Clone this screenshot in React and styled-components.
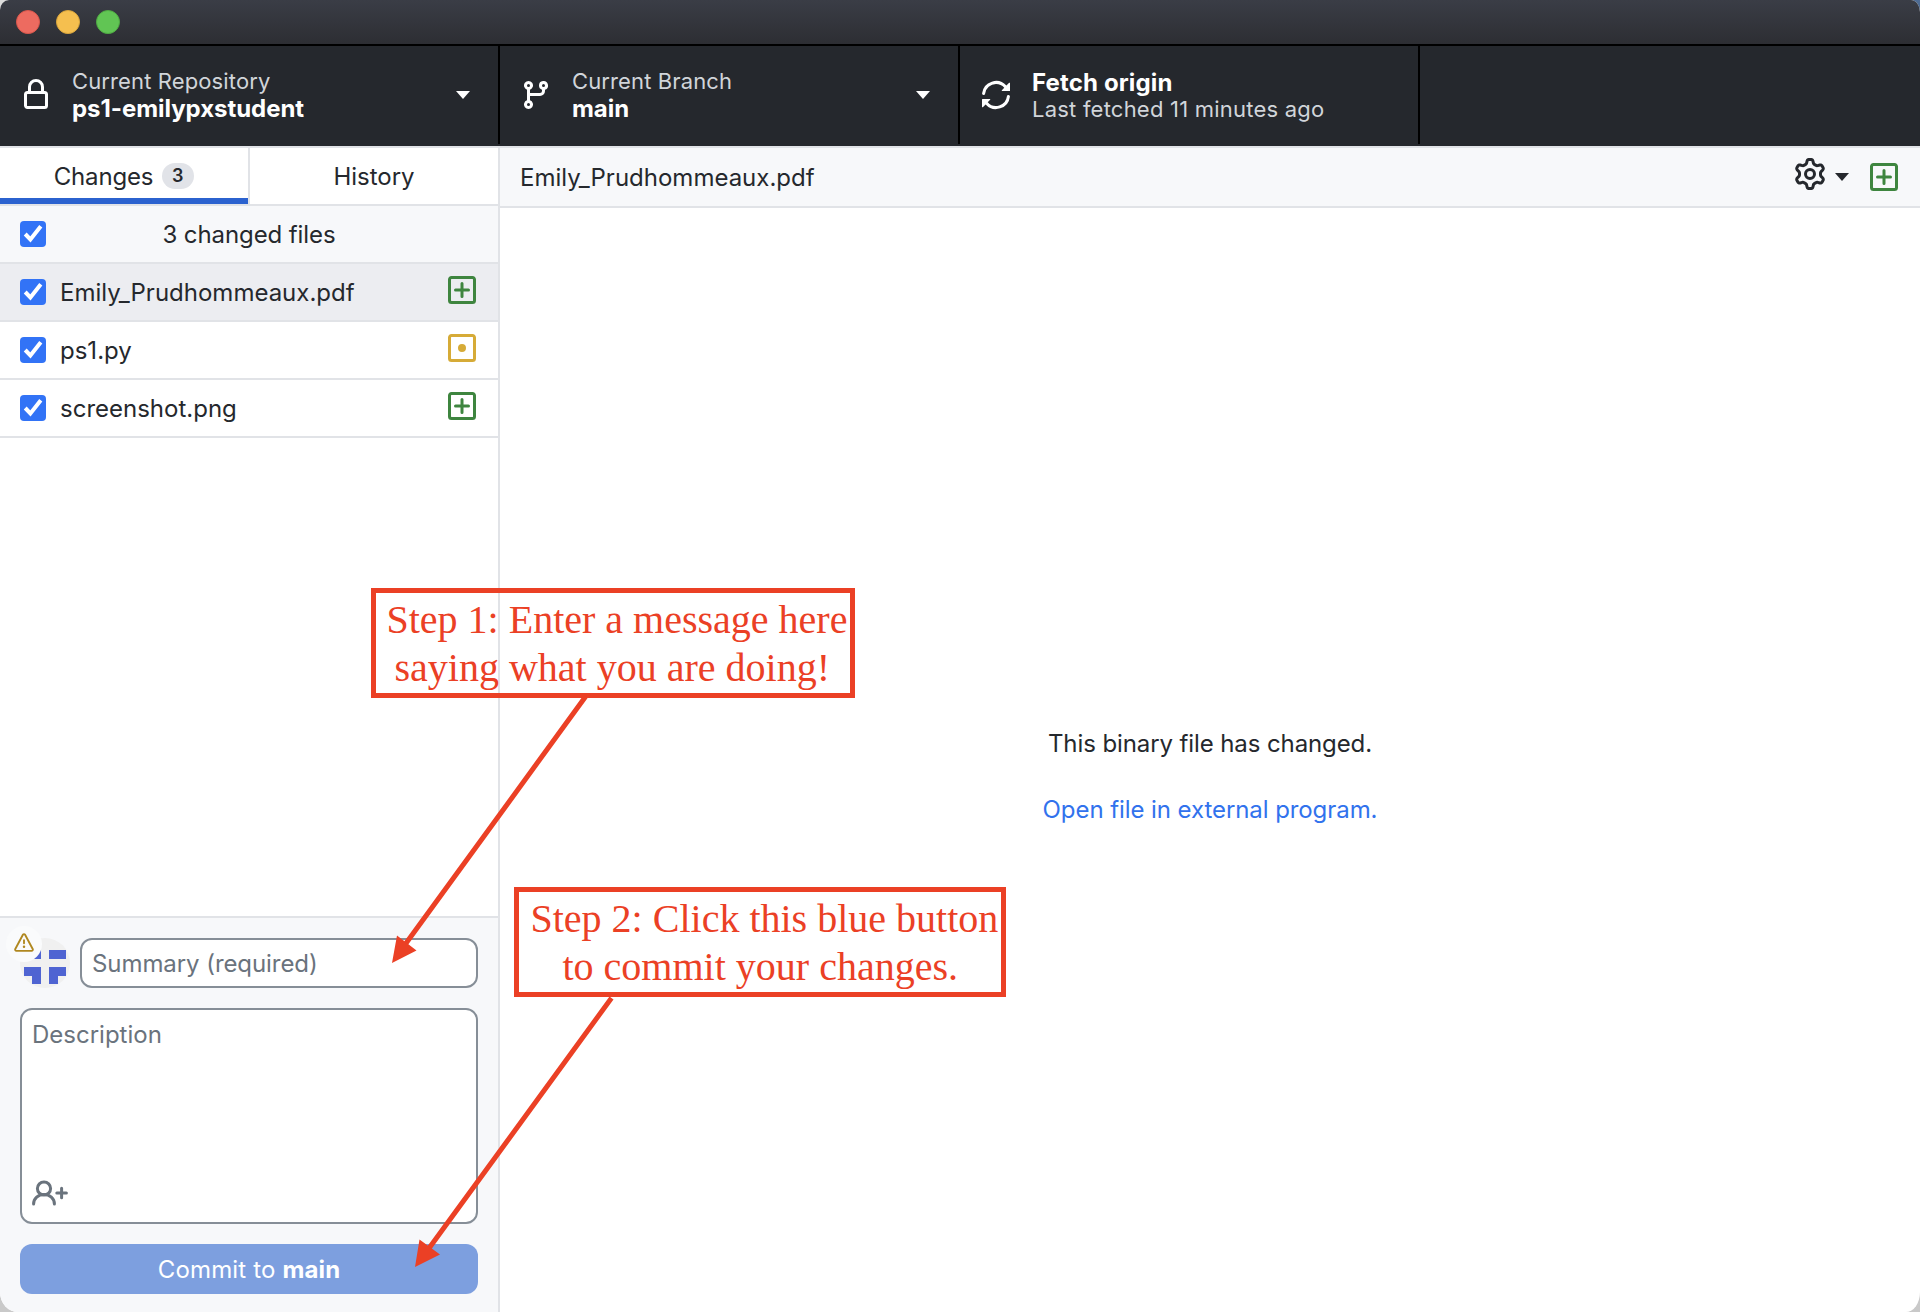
import React from "react";
import styled, { createGlobalStyle, css } from "styled-components";

const GlobalStyle = createGlobalStyle`
  *, *::before, *::after { box-sizing: border-box; }
  body {
    margin: 0;
    background: #d4d4d4;
    font-family: Inter, "Liberation Sans", sans-serif;
    font-size: 24px;
    line-height: 28px;
    color: #25282d;
  }
  button, input, textarea { font: inherit; letter-spacing: inherit; }
`;

const border = "#e1e3e7";

/* ---------- window ---------- */

const Desktop = styled.div`
  width: 1920px;
  height: 1312px;
  overflow: hidden;
  background: linear-gradient(to bottom, transparent 50%, #c9c9c9 50%),
    linear-gradient(to right, #dcdcdc 50%, #4e6c94 50%);
`;

const Window = styled.div`
  position: relative;
  display: flex;
  flex-direction: column;
  height: 100%;
  overflow: hidden;
  background: #fff;
  border-radius: 9px 9px 14px 18px / 10px 12px 20px 20px;
`;

const TitleBar = styled.header`
  display: flex;
  align-items: center;
  gap: 16px;
  flex: none;
  height: 46px;
  padding-left: 16px;
  background: linear-gradient(#3a3d46, #2d2e33);
  border-bottom: 2px solid #000;
`;

const TrafficLight = styled.span`
  width: 24px;
  height: 24px;
  border-radius: 50%;
  background: ${(p) => p.$fill};
  border: 1px solid ${(p) => p.$edge};
`;

/* ---------- toolbar ---------- */

const Toolbar = styled.nav`
  display: flex;
  flex: none;
  height: 100px;
  padding-bottom: 2px;
  background: #25282d;
`;

const ToolbarButton = styled.button`
  display: flex;
  align-items: center;
  width: ${(p) => p.$width}px;
  padding: 0 28.5px 0 20px;
  border: 0;
  border-right: 2px solid #000;
  background: none;
  color: #fff;
  text-align: left;
`;

const ToolbarText = styled.span`
  display: flex;
  flex: 1;
  flex-direction: column;
  padding-left: 20px;
  white-space: nowrap;
`;

const Caption = styled.span`
  font-size: 22px;
  line-height: 26px;
  letter-spacing: ${(p) => p.$tracking || "0.12px"};
  color: #d1d5da;
`;

const Title = styled.strong`
  padding-top: 1px;
  margin-bottom: -1px;
  font-weight: 700;
  letter-spacing: ${(p) => p.$tracking || "-0.05px"};
`;

const Icon = styled.svg`
  display: block;
  flex: none;
  width: ${(p) => p.$size || 32}px;
  height: ${(p) => p.$size || 32}px;
  fill: currentColor;
  ${(p) => p.$flip && css`transform: scaleX(-1);`}
`;

const Caret = styled.span`
  width: 0;
  height: 0;
  border: 7.5px solid transparent;
  border-top: 8px solid currentColor;
  border-bottom: 0;
`;

/* ---------- body ---------- */

const Body = styled.main`
  display: flex;
  flex: 1;
  min-height: 0;
  border-top: 2px solid ${border};
`;

const Sidebar = styled.aside`
  display: flex;
  flex-direction: column;
  flex: none;
  width: 500px;
  border-right: 2px solid ${border};
`;

const Tabs = styled.div`
  display: grid;
  grid-template-columns: 250px 248px;
  flex: none;
  height: 58px;
  border-bottom: 2px solid ${border};
`;

const Tab = styled.button`
  display: flex;
  align-items: center;
  justify-content: center;
  gap: 9px;
  padding: 0;
  border: 0;
  background: #fff;
  color: inherit;
  ${(p) =>
    p.$selected &&
    css`
      border-right: 2px solid ${border};
      background: linear-gradient(#2b62cf, #2b62cf) bottom / 100% 6px no-repeat #fff;
    `}
`;

const TabLabel = styled.span`
  padding-top: 2px;
  letter-spacing: ${(p) => p.$tracking || "0"};
`;

const Counter = styled.span`
  width: 32px;
  height: 26px;
  padding-right: 1px;
  border-radius: 13px;
  background: #e1e3e8;
  font-size: 18px;
  font-weight: 600;
  line-height: 26px;
  text-align: center;
`;

const FileRow = styled.div`
  display: flex;
  align-items: center;
  flex: none;
  height: 58px;
  padding: 0 22px 0 20px;
  border-bottom: 2px solid ${border};
  background: ${(p) => p.$bg || "#fff"};
`;

const FileName = styled.span`
  flex: 1;
  padding: 2px 0 0 14px;
`;

const FileCount = styled.span`
  flex: 1;
  padding: 2px 24px 0 0;
  text-align: center;
  letter-spacing: -0.09px;
`;

const CheckBox = styled.span`
  display: flex;
  width: 26px;
  height: 26px;
  border-radius: 4px;
  background: #3273f6;
`;

const StatusIcon = styled(Icon)`
  margin-bottom: ${(p) => p.$lift || 0}px;
  margin-right: -2px;
  color: ${(p) => p.$color};
`;

/* ---------- commit form ---------- */

const CommitForm = styled.form`
  display: flex;
  flex-direction: column;
  gap: 20px;
  margin-top: auto;
  padding: 20px 20px 18px;
  border-top: 2px solid ${border};
  background: #f7f8fa;
`;

const SummaryLine = styled.div`
  display: flex;
  gap: 10px;
`;

const AvatarWrap = styled.div`
  position: relative;
  width: 50px;
  height: 50px;
`;

const AvatarPicture = styled.svg`
  display: block;
  width: 50px;
  height: 50px;
  border-radius: 50%;
  background: #f0f0f0;
  fill: #4f64d2;
`;

const WarningBadge = styled.span`
  position: absolute;
  top: -12px;
  left: -14px;
  display: grid;
  place-items: center;
  width: 36px;
  height: 36px;
  padding-bottom: 2px;
  border-radius: 50%;
  background: #fafbfc;
  color: #b08820;
`;

const SummaryInput = styled.input`
  flex: 1;
  min-width: 0;
  height: 50px;
  padding: 0 10px;
  border: 2px solid #868e97;
  border-radius: 12px;
  background: #fff;
  outline: 0;
  &::placeholder { color: #6a737d; opacity: 1; letter-spacing: -0.07px; }
`;

const DescriptionBox = styled.div`
  display: flex;
  flex-direction: column;
  height: 216px;
  padding: 11px 10px 14px;
  border: 2px solid #868e97;
  border-radius: 12px;
  background: #fff;
`;

const DescriptionInput = styled.textarea`
  flex: 1;
  padding: 0;
  border: 0;
  outline: 0;
  resize: none;
  background: none;
  overflow: hidden;
  &::placeholder { color: #6a737d; opacity: 1; }
`;

const CoAuthorIcon = styled.svg`
  display: block;
  width: 40px;
  height: 30px;
  fill: none;
  stroke: #6a737d;
  stroke-width: 3;
  stroke-linecap: round;
`;

const CommitButton = styled.button`
  height: 50px;
  padding: 2px 0 0;
  border: 0;
  border-radius: 12px;
  background: #7d9fdf;
  color: #fff;
  letter-spacing: 0.15px;
  strong { font-weight: 700; }
`;

/* ---------- file view ---------- */

const FileView = styled.section`
  display: flex;
  flex: 1;
  flex-direction: column;
`;

const FileHeader = styled.div`
  display: flex;
  align-items: center;
  flex: none;
  height: 60px;
  padding: 0 22px 0 20px;
  border-bottom: 2px solid ${border};
  background: #f7f8fa;
`;

const FilePath = styled.span`
  flex: 1;
  padding-top: 2px;
`;

const DiffOptions = styled.span`
  display: flex;
  align-items: center;
  gap: 9px;
  margin-right: 19px;
  ${Icon} { margin-bottom: 6px; }
`;

const BinaryNotice = styled.div`
  display: flex;
  flex: 1;
  flex-direction: column;
  align-items: center;
  justify-content: center;
  gap: 38px;
  padding-top: 33px;
  letter-spacing: -0.1px;
`;

const ExternalLink = styled.a`
  color: #3172ed;
  letter-spacing: -0.076px;
`;

/* ---------- annotations ---------- */

const red = "#eb4025";

const Callout = styled.div`
  position: absolute;
  top: ${(p) => p.$top}px;
  left: ${(p) => p.$left}px;
  width: ${(p) => p.$width}px;
  height: 110px;
  padding-top: 3px;
  border: 5px solid ${red};
  color: ${red};
  font: 40px/48px "Liberation Serif", serif;
  white-space: nowrap;
`;

const CalloutLine = styled.div`
  padding-left: ${(p) => p.$indent}px;
`;

const Arrows = styled.svg`
  position: absolute;
  inset: 0;
  pointer-events: none;
  fill: ${red};
  stroke: ${red};
`;

/* ---------- icon shapes ---------- */

const paths = {
  lock: "M4 4v2h-.25A1.75 1.75 0 002 7.75v5.5c0 .966.784 1.75 1.75 1.75h8.5A1.75 1.75 0 0014 13.25v-5.5A1.75 1.75 0 0012.25 6H12V4a4 4 0 10-8 0zm6.5 2V4a2.5 2.5 0 10-5 0v2h5zM12 7.5h.25a.25.25 0 01.25.25v5.5a.25.25 0 01-.25.25h-8.5a.25.25 0 01-.25-.25v-5.5a.25.25 0 01.25-.25H12z",
  branch: "M11.75 2.5a.75.75 0 100 1.5.75.75 0 000-1.5zm-2.25.75a2.25 2.25 0 113 2.122V6A2.5 2.5 0 0110 8.5H5v2.128a2.251 2.251 0 11-1.5 0V5.372a2.25 2.25 0 111.5 0V7h5a1 1 0 001-1v-.628A2.25 2.25 0 019.5 3.25zM4.25 12a.75.75 0 100 1.5.75.75 0 000-1.5zM3.5 3.25a.75.75 0 111.5 0 .75.75 0 01-1.5 0z",
  sync: "M8 2.5a5.487 5.487 0 00-4.131 1.869l1.204 1.204A.25.25 0 014.896 6H1.25A.25.25 0 011 5.75V2.104a.25.25 0 01.427-.177l1.38 1.38A7.001 7.001 0 0114.95 7.16a.75.75 0 11-1.49.178A5.501 5.501 0 008 2.5zM1.705 8.005a.75.75 0 01.834.656 5.501 5.501 0 009.592 2.97l-1.204-1.204a.25.25 0 01.177-.427h3.646a.25.25 0 01.25.25v3.646a.25.25 0 01-.427.177l-1.38-1.38A7.001 7.001 0 011.05 8.84a.75.75 0 01.656-.834z",
  alert: "M8.22 1.754a.25.25 0 00-.44 0L1.698 13.132a.25.25 0 00.22.368h12.164a.25.25 0 00.22-.368L8.22 1.754zm-1.763-.707c.659-1.234 2.427-1.234 3.086 0l6.082 11.378A1.75 1.75 0 0114.082 15H1.918a1.75 1.75 0 01-1.543-2.575L6.457 1.047zM9 11a1 1 0 11-2 0 1 1 0 012 0zm-.25-5.25a.75.75 0 00-1.5 0v2.5a.75.75 0 001.5 0v-2.5z",
  gear: "M7.429 1.525a6.593 6.593 0 011.142 0c.036.003.108.036.137.146l.289 1.105c.147.56.55.967.997 1.189.174.086.341.183.501.29.417.278.97.423 1.53.27l1.102-.303c.11-.03.175.016.195.046.219.31.41.641.573.989.014.031.022.11-.059.19l-.815.806c-.411.406-.562.957-.53 1.456a4.588 4.588 0 010 .582c-.032.499.119 1.05.53 1.456l.815.806c.08.08.073.159.059.19a6.494 6.494 0 01-.573.99c-.02.029-.086.074-.195.045l-1.103-.303c-.559-.153-1.112-.008-1.529.27-.16.107-.327.204-.5.29-.449.222-.851.628-.998 1.189l-.289 1.105c-.029.11-.101.143-.137.146a6.613 6.613 0 01-1.142 0c-.036-.003-.108-.037-.137-.146l-.289-1.105c-.147-.56-.55-.967-.997-1.189a4.502 4.502 0 01-.501-.29c-.417-.278-.97-.423-1.53-.27l-1.102.303c-.11.03-.175-.016-.195-.046a6.492 6.492 0 01-.573-.989c-.014-.031-.022-.11.059-.19l.815-.806c.411-.406.562-.957.53-1.456a4.587 4.587 0 010-.582c.032-.499-.119-1.05-.53-1.456l-.815-.806c-.08-.08-.073-.159-.059-.19a6.44 6.44 0 01.573-.99c.02-.029.086-.075.195-.045l1.103.303c.559.153 1.112.008 1.529-.27.16-.107.327-.204.5-.29.449-.222.851-.628.998-1.189l.289-1.105c.029-.11.101-.143.137-.146zM8 0c-.236 0-.47.01-.701.03-.743.065-1.29.615-1.458 1.261l-.29 1.106c-.017.066-.078.158-.211.224a5.994 5.994 0 00-.668.386c-.123.082-.233.09-.3.071L3.27 2.776c-.644-.177-1.392.02-1.82.63a7.977 7.977 0 00-.704 1.217c-.315.675-.111 1.422.363 1.891l.815.806c.05.048.098.147.088.294a6.084 6.084 0 000 .772c.01.147-.038.246-.088.294l-.815.806c-.474.469-.678 1.216-.363 1.891.2.428.436.835.704 1.218.428.609 1.176.806 1.82.63l1.103-.303c.066-.019.176-.011.299.071.213.143.436.272.668.386.133.066.194.158.212.224l.289 1.106c.169.646.715 1.196 1.458 1.26a8.094 8.094 0 001.402 0c.743-.064 1.29-.614 1.458-1.26l.29-1.106c.017-.066.078-.158.211-.224a5.98 5.98 0 00.668-.386c.123-.082.233-.09.3-.071l1.102.302c.644.177 1.392-.02 1.82-.63.268-.382.505-.789.704-1.217.315-.675.111-1.422-.364-1.891l-.814-.806c-.05-.048-.098-.147-.088-.294a6.1 6.1 0 000-.772c-.01-.147.039-.246.088-.294l.814-.806c.475-.469.679-1.216.364-1.891a7.992 7.992 0 00-.704-1.218c-.428-.609-1.176-.806-1.82-.63l-1.103.303c-.066.019-.176.011-.299-.071a5.991 5.991 0 00-.668-.386c-.133-.066-.194-.158-.212-.224L10.16 1.29C9.99.645 9.444.095 8.701.031A8.094 8.094 0 008 0zm1.5 8a1.5 1.5 0 11-3 0 1.5 1.5 0 013 0zM11 8a3 3 0 11-6 0 3 3 0 016 0z",
};

const square =
  "M13.25 2.5H2.75a.25.25 0 00-.25.25v10.5c0 .138.112.25.25.25h10.5a.25.25 0 00.25-.25V2.75a.25.25 0 00-.25-.25zM2.75 1h10.5c.966 0 1.75.784 1.75 1.75v10.5A1.75 1.75 0 0113.25 15H2.75A1.75 1.75 0 011 13.25V2.75C1 1.784 1.784 1 2.75 1z";

const statuses = {
  added: {
    color: "#3e853f",
    d: square + "M8 4a.75.75 0 01.75.75v2.5h2.5a.75.75 0 010 1.5h-2.5v2.5a.75.75 0 01-1.5 0v-2.5h-2.5a.75.75 0 010-1.5h2.5v-2.5A.75.75 0 018 4z",
  },
  modified: { color: "#d6ab37", d: square + "M8 10a2 2 0 100-4 2 2 0 000 4z" },
};

const Octicon = ({ name, ...rest }) => (
  <Icon viewBox="0 0 16 16" fillRule="evenodd" {...rest}>
    <path d={paths[name]} />
  </Icon>
);

const Status = ({ kind, lift }) => (
  <StatusIcon viewBox="0 0 16 16" fillRule="evenodd" $color={statuses[kind].color} $lift={lift}>
    <path d={statuses[kind].d} />
  </StatusIcon>
);

const Checked = () => (
  <CheckBox role="checkbox" aria-checked="true">
    <svg width="26" height="26" fill="none" stroke="#fff" strokeWidth="4">
      <path d="M5.2 13L10.4 18.4L20.8 5.2" />
    </svg>
  </CheckBox>
);

const files = [
  { name: "Emily_Prudhommeaux.pdf", kind: "added", bg: "#ecedf1" },
  { name: "ps1.py", kind: "modified" },
  { name: "screenshot.png", kind: "added" },
];

export default function App() {
  return (
    <Desktop>
      <GlobalStyle />
      <Window>
        <TitleBar>
          <TrafficLight $fill="#ed6b60" $edge="#d9574c" />
          <TrafficLight $fill="#f5bf4f" $edge="#d9a53c" />
          <TrafficLight $fill="#61c554" $edge="#4fab43" />
        </TitleBar>

        <Toolbar>
          <ToolbarButton $width={500}>
            <Octicon name="lock" />
            <ToolbarText>
              <Caption>Current Repository</Caption>
              <Title>ps1-emilypxstudent</Title>
            </ToolbarText>
            <Caret />
          </ToolbarButton>
          <ToolbarButton $width={460}>
            <Octicon name="branch" />
            <ToolbarText>
              <Caption>Current Branch</Caption>
              <Title>main</Title>
            </ToolbarText>
            <Caret />
          </ToolbarButton>
          <ToolbarButton $width={460}>
            <Octicon name="sync" $flip />
            <ToolbarText>
              <Title $tracking="0.15px">Fetch origin</Title>
              <Caption $tracking="0.22px">Last fetched 11 minutes ago</Caption>
            </ToolbarText>
          </ToolbarButton>
        </Toolbar>

        <Body>
          <Sidebar>
            <Tabs>
              <Tab $selected>
                <TabLabel $tracking="-0.18px">Changes</TabLabel>
                <Counter>3</Counter>
              </Tab>
              <Tab>
                <TabLabel>History</TabLabel>
              </Tab>
            </Tabs>
            <FileRow $bg="#f7f8fa">
              <Checked />
              <FileCount>3 changed files</FileCount>
            </FileRow>
            {files.map((f) => (
              <FileRow key={f.name} $bg={f.bg}>
                <Checked />
                <FileName>{f.name}</FileName>
                <Status kind={f.kind} lift={4} />
              </FileRow>
            ))}
            <CommitForm>
              <SummaryLine>
                <AvatarWrap>
                  <AvatarPicture viewBox="0 0 50 50">
                    <path d="M4 12h17v9H4zM29 12h17v9H29zM4 29h17v17h-9v-8H4zM29 29h17v9h-8v8h-9z" />
                  </AvatarPicture>
                  <WarningBadge>
                    <Octicon name="alert" $size={20} />
                  </WarningBadge>
                </AvatarWrap>
                <SummaryInput placeholder="Summary (required)" />
              </SummaryLine>
              <DescriptionBox>
                <DescriptionInput placeholder="Description" />
                <CoAuthorIcon viewBox="0 0 40 30">
                  <circle cx="12" cy="10.5" r="6.6" />
                  <path d="M1.6 26a10.4 9.6 0 0120.8 0M29.6 10.2v9.6M24.8 15h9.6" />
                </CoAuthorIcon>
              </DescriptionBox>
              <CommitButton type="button">
                Commit to <strong>main</strong>
              </CommitButton>
            </CommitForm>
          </Sidebar>

          <FileView>
            <FileHeader>
              <FilePath>Emily_Prudhommeaux.pdf</FilePath>
              <DiffOptions>
                <Octicon name="gear" />
                <Caret />
              </DiffOptions>
              <Status kind="added" />
            </FileHeader>
            <BinaryNotice>
              <span>This binary file has changed.</span>
              <ExternalLink>Open file in external program.</ExternalLink>
            </BinaryNotice>
          </FileView>
        </Body>

        <Arrows width="1920" height="1312">
          <path d="M586 696L404 946M611.5 998L427 1251" strokeWidth="5" fill="none" />
          <path d="M392 963L397 935.5L416.5 950.5ZM415 1267L419.5 1239.5L440 1254.5Z" stroke="none" />
        </Arrows>
        <Callout $top={588} $left={371} $width={484}>
          <CalloutLine $indent={10.5}>Step 1: Enter a message here</CalloutLine>
          <CalloutLine $indent={18.5}>saying what you are doing!</CalloutLine>
        </Callout>
        <Callout $top={887} $left={514} $width={492}>
          <CalloutLine $indent={11.5}>Step 2: Click this blue button</CalloutLine>
          <CalloutLine $indent={43.5}>to commit your changes.</CalloutLine>
        </Callout>
      </Window>
    </Desktop>
  );
}
